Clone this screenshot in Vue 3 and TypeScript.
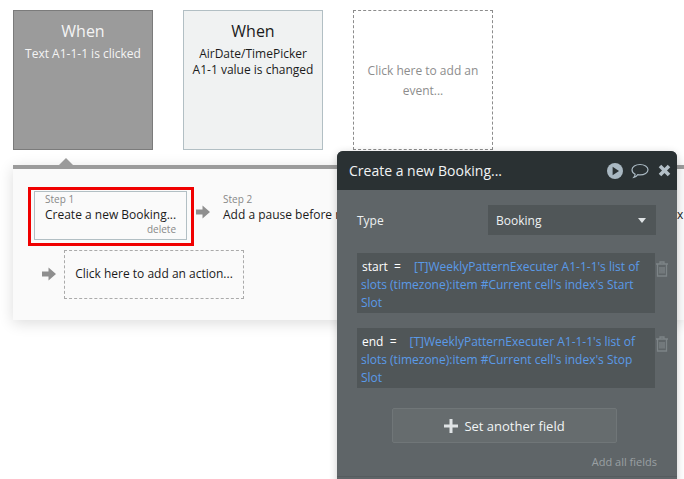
<script setup lang="ts">
const cards = [
  { title: 'When', lines: ['Text A1-1-1 is clicked'], cls: 'card selected' },
  { title: 'When', lines: ['AirDate/TimePicker', 'A1-1 value is changed'], cls: 'card' },
]
const fields = [
  { label: 'start\u00a0\u00a0=', text: "[T]WeeklyPatternExecuter A1-1-1's list of slots (timezone):item #Current cell's index's Start Slot" },
  { label: 'end\u00a0\u00a0=', text: "[T]WeeklyPatternExecuter A1-1-1's list of slots (timezone):item #Current cell's index's Stop Slot" },
]
</script>

<template>
  <div class="page">
    <div class="events">
      <div v-for="(c, i) in cards" :key="i" :class="c.cls">
        <div class="card-title">{{ c.title }}</div>
        <div v-for="l in c.lines" :key="l" class="card-line">{{ l }}</div>
      </div>
      <div class="add-event">Click here to add an event...</div>
    </div>

    <div class="workflow">
      <div class="notch"></div>
      <div class="row row-one">
        <div class="highlight">
          <div class="step">
            <div class="step-no">Step 1</div>
            <div class="step-name">Create a new Booking...</div>
            <div class="step-del">delete</div>
          </div>
        </div>
        <svg class="arrow" width="14" height="14" viewBox="0 0 14 14"><path d="M0 4.600h6.500V.6L14 7l-7.500 6.400V9.400H0z" fill="#8f8f8f" /></svg>
        <div class="step plain">
          <div class="step-no">Step 2</div>
          <div class="step-name">Add a pause before next action</div>
        </div>
        <div class="step-next">x</div>
      </div>
      <div class="row row-two">
        <svg class="arrow" width="14" height="14" viewBox="0 0 14 14"><path d="M0 4.600h6.500V.6L14 7l-7.500 6.400V9.400H0z" fill="#8f8f8f" /></svg>
        <div class="add-action"><span>Click here to add an action...</span></div>
      </div>
    </div>

    <div class="editor">
      <div class="head">
        <div class="head-title">Create a new Booking...</div>
        <svg class="ic-play" width="16" height="16" viewBox="0 0 16 16"><circle cx="8" cy="8" r="8" fill="#a9b8c2" /><path d="M5.600 3.800 12 8l-6.400 4.200z" fill="#2a3133" /></svg>
        <svg class="ic-chat" width="18" height="16" viewBox="0 0 18 16"><path d="M9 1.500c4.400 0 8 2.300 8 5.200s-3.600 5.200-8 5.200c-.8 0-1.500-.1-2.200-.2C5.800 13.100 4.400 14.300 2.800 14.500c.8-.9 1.200-2 1.300-3.300C2.200 10.300 1 8.600 1 6.700 1 3.800 4.600 1.500 9 1.500z" fill="none" stroke="#a9b8c2" stroke-width="1.200" /></svg>
        <svg class="ic-close" width="13" height="13" viewBox="0 0 13 13"><path d="M2 2l9 9M11 2l-9 9" stroke="#b4c0c8" stroke-width="3.600" fill="none" /></svg>
      </div>
      <div class="body">
        <div class="type-row">
          <span class="type-label">Type</span>
          <div class="select">
            <span>Booking</span>
            <i class="caret"></i>
          </div>
        </div>
        <div v-for="f in fields" :key="f.label" class="field-row">
          <div class="field">
            <span class="f-label">{{ f.label }}</span><span class="f-gap"></span><span class="f-val">{{ f.text }}</span>
          </div>
          <svg class="trash" width="14" height="16" viewBox="0 0 14 16"><path d="M1 3h12M5 3V1h4v2M2.500 3v12h9V3M5 6v6.500M7 6v6.500M9 6v6.500" fill="none" stroke="#7d8487" stroke-width="1.300" /></svg>
        </div>
        <div class="btn-wrap">
          <div class="btn">
            <svg width="14" height="14" viewBox="0 0 14 14"><path d="M7 0v14M0 7h14" stroke="#dfe3e5" stroke-width="3" fill="none" /></svg>
            <span>Set another field</span>
          </div>
        </div>
        <div class="add-all">Add all fields</div>
      </div>
      <div class="divider"></div>
    </div>
  </div>
</template>

<style>
html, body { margin: 0; padding: 0; background: #fff; }
</style>

<style scoped>
.page {
  position: relative;
  width: 684px;
  height: 479px;
  overflow: hidden;
  background: #fff;
  font-family: "Open Sans", "Liberation Sans", sans-serif;
  font-size: 12px;
  color: #1b1b1b;
}
.events {
  display: flex;
  gap: 30px;
  padding: 10px 0 0 13px;
}
.card {
  box-sizing: border-box;
  width: 140px;
  height: 140px;
  background: #f0f2f2;
  border: 1px solid #b2bfc4;
  text-align: center;
  padding-top: 8px;
  line-height: 16px;
  font-size: 12px;
}
.card.selected {
  background: #9b9b9b;
  border-color: #7b7b7b;
  color: #f4f4f4;
}
.card-title {
  font-size: 16px;
  line-height: 24px;
  margin-bottom: 3px;
}
.add-event {
  box-sizing: border-box;
  width: 140px;
  height: 140px;
  border: 1px dashed #8c8c8c;
  display: flex;
  align-items: center;
  justify-content: center;
  text-align: center;
  color: #8d8d8d;
  line-height: 20px;
  padding: 2px 12px 0;
}
.workflow {
  position: relative;
  box-sizing: border-box;
  width: 671px;
  height: 155px;
  margin: 15px 0 0 13px;
  background: #fafafa;
  border-top: 4px solid #9b9b9b;
  box-shadow: 0 3px 14px rgba(0, 0, 0, 0.14);
}
.notch {
  position: absolute;
  left: 46px;
  top: -11px;
  width: 0;
  height: 0;
  border-left: 7.500px solid transparent;
  border-right: 7.500px solid transparent;
  border-bottom: 7px solid #9b9b9b;
}
.row { display: flex; align-items: flex-start; }
.row-one { padding: 18px 0 0 15px; }
.row-two { padding: 4px 0 0 29px; align-items: center; }
.highlight {
  box-sizing: border-box;
  width: 166px;
  height: 59px;
  flex: none;
  border: 3px solid #f00000;
  padding: 1px 4px 3px 3px;
  background: #fafafa;
}
.step {
  box-sizing: border-box;
  height: 49px;
  width: 153px;
  border: 1px solid #b2bfc4;
  background: #fafafa;
  padding: 1px 10px 0;
}
.step.plain {
  flex: none;
  border-color: transparent;
  width: 465px;
  margin: 4px 0 0 2px;
}
.step-no { font-size: 10px; line-height: 13px; color: #888; }
.step-name { font-size: 12px; line-height: 16px; white-space: nowrap; margin-top: 1px; }
.step-del {
  font-size: 10px;
  line-height: 13px;
  color: #888;
  text-align: right;
}
.step-next { flex: none; line-height: 16px; margin-top: 20px; }
.arrow { flex: none; }
.row-one .arrow { margin: 18px 0 0 2px; }
.row-two .arrow { margin-bottom: 2px; }
.add-action {
  box-sizing: border-box;
  width: 180px;
  height: 49px;
  margin-left: 8px;
  border: 1px dashed #aaa;
  display: flex;
  align-items: center;
  justify-content: center;
  padding-bottom: 2px;
}
.editor {
  position: absolute;
  left: 337px;
  top: 151px;
  width: 340px;
  height: 340px;
  border-radius: 6px 6px 0 0;
  overflow: hidden;
  background: #5f6568;
  box-shadow: 0 2px 8px rgba(0, 0, 0, 0.2);
}
.head {
  height: 39px;
  background: #2a3133;
  display: flex;
  align-items: center;
  padding: 0 6px 0 12px;
  color: #f1f4f5;
}
.head-title { flex: 1; font-size: 14px; }
.ic-play { margin-right: 8px; }
.ic-chat { margin-right: 9px; }
.body { padding: 15px 0 0 20px; color: #eef1f2; }
.type-row {
  display: flex;
  align-items: center;
  justify-content: space-between;
  width: 299px;
  height: 30px;
}
.select {
  box-sizing: border-box;
  width: 168px;
  height: 30px;
  background: #505658;
  display: flex;
  align-items: center;
  justify-content: space-between;
  padding: 0 10px 0 8px;
}
.caret {
  width: 0;
  height: 0;
  border-left: 4.500px solid transparent;
  border-right: 4.500px solid transparent;
  border-top: 5px solid #dfe3e5;
}
.field-row {
  display: flex;
  align-items: flex-start;
  margin-top: 18px;
}
.field-row + .field-row { margin-top: 15px; }
.field {
  box-sizing: border-box;
  width: 298px;
  height: 60px;
  background: #505658;
  padding: 5px 4px 0;
  font-size: 12px;
  line-height: 18px;
}
.f-label { color: #fff; margin-left: 1px; }
.f-gap { display: inline-block; width: 13px; }
.f-val { color: #5a9ae8; }
.trash { flex: none; margin-top: 8px; }
.btn-wrap { padding: 20px 0 0 35px; }
.btn {
  box-sizing: border-box;
  width: 225px;
  height: 35px;
  background: #666c6e;
  border: 1px solid #707678;
  border-radius: 2px;
  display: flex;
  align-items: center;
  justify-content: center;
  gap: 6px;
  font-size: 13px;
  color: #f1f4f5;
}
.add-all {
  width: 300px;
  text-align: right;
  margin-top: 11px;
  font-size: 11px;
  line-height: 15px;
  color: #9aa0a3;
}
.divider {
  margin-top: 7px;
  border-top: 1px solid #565c5f;
}
</style>
